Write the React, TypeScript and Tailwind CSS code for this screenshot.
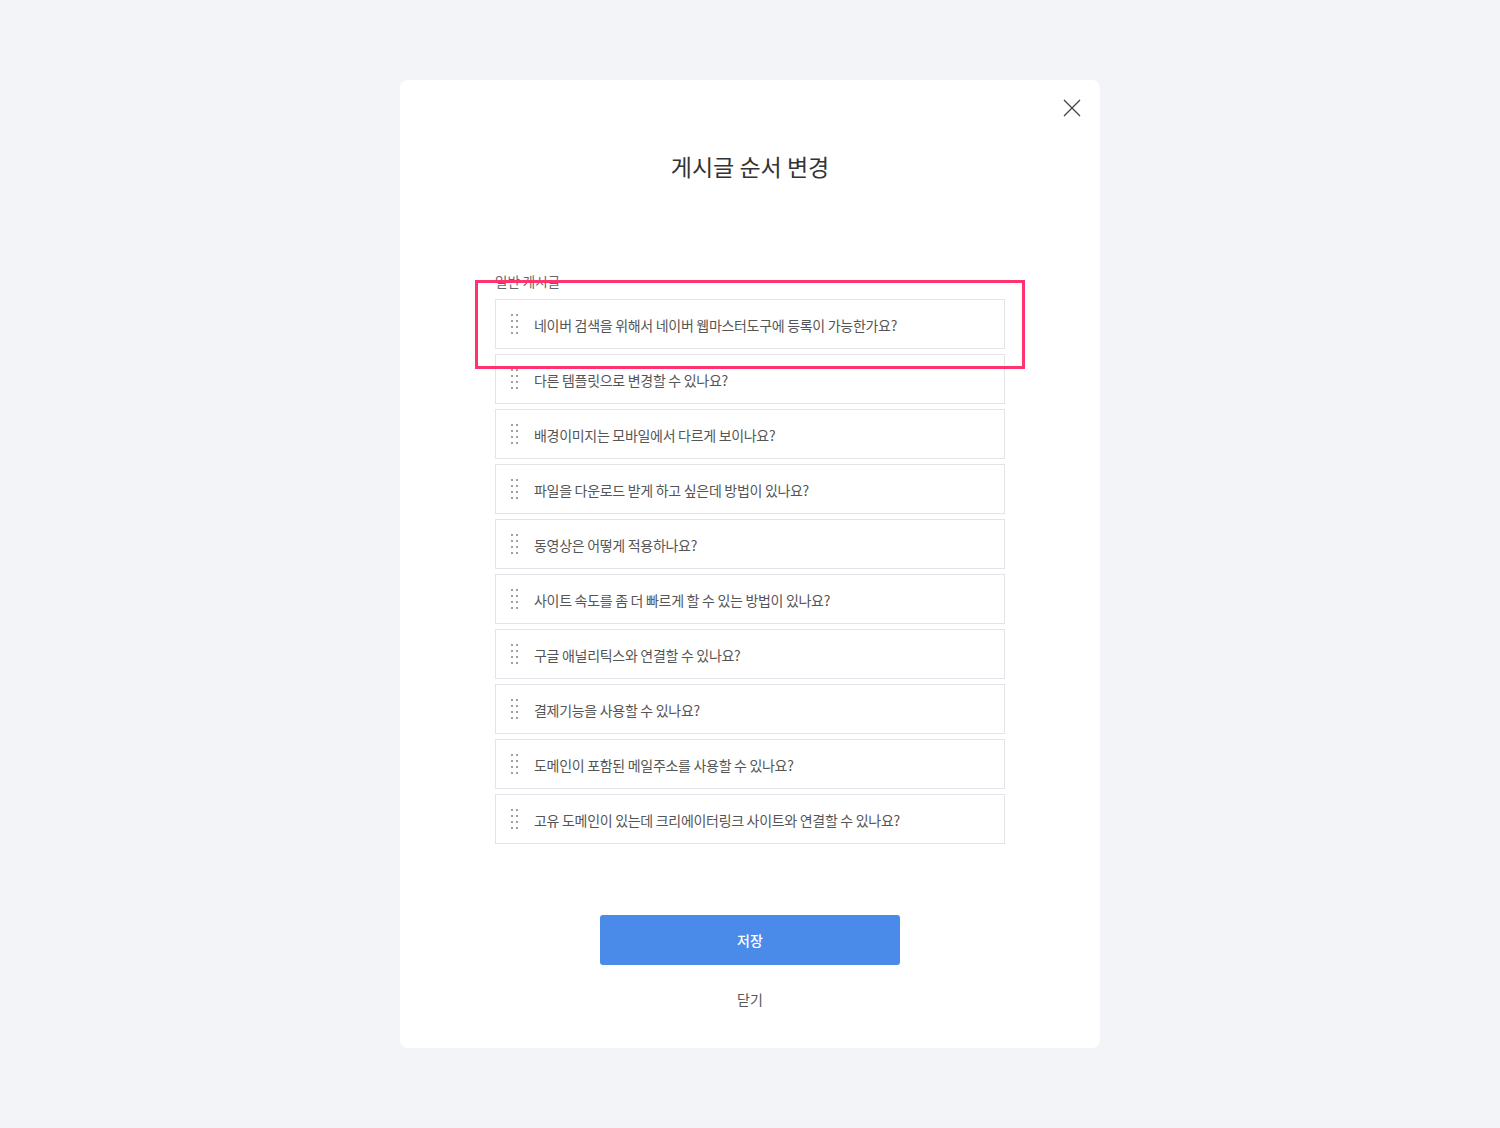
import React from "react";

const items = [
  "네이버 검색을 위해서 네이버 웹마스터도구에 등록이 가능한가요?",
  "다른 템플릿으로 변경할 수 있나요?",
  "배경이미지는 모바일에서 다르게 보이나요?",
  "파일을 다운로드 받게 하고 싶은데 방법이 있나요?",
  "동영상은 어떻게 적용하나요?",
  "사이트 속도를 좀 더 빠르게 할 수 있는 방법이 있나요?",
  "구글 애널리틱스와 연결할 수 있나요?",
  "결제기능을 사용할 수 있나요?",
  "도메인이 포함된 메일주소를 사용할 수 있나요?",
  "고유 도메인이 있는데 크리에이터링크 사이트와 연결할 수 있나요?",
];

function Handle() {
  return (
    <div className="flex flex-col gap-[4px] w-[7px] shrink-0">
      {[0, 1, 2, 3].map((r) => (
        <div key={r} className="flex gap-[3px]">
          <span className="block w-[2px] h-[2px] bg-[#a0a0a0]" />
          <span className="block w-[2px] h-[2px] bg-[#a0a0a0]" />
        </div>
      ))}
    </div>
  );
}

export default function App() {
  return (
    <div
      className="min-h-[1128px] bg-[#f3f4f8] flex justify-center pt-[80px]"
      style={{ fontFamily: '"Noto Sans CJK KR", "Noto Sans", sans-serif' }}
    >
      <div className="relative w-[700px] h-[968px] bg-white rounded-[8px] flex flex-col items-center">
        <button className="absolute top-[19px] right-[19px] w-[18px] h-[18px] text-[#444]">
          <svg width="18" height="18" viewBox="0 0 18 18" fill="none">
            <path d="M1 1L17 17M17 1L1 17" stroke="#444" strokeWidth="1.3" />
          </svg>
        </button>
        <h1 className="mt-[70px] text-[23px] leading-[32px] text-[#333] font-normal">
          게시글 순서 변경
        </h1>
        <div className="relative w-[510px] mt-[90px]">
          <div className="text-[13.5px] leading-[18px] text-[#666] h-[18px]">일반 게시글</div>
          <div className="flex flex-col gap-[5px] mt-[9px]">
            {items.map((t) => (
              <div
                key={t}
                className="h-[50px] border border-[#e3e4e8] flex items-center pl-[15px] gap-[16px]"
              >
                <Handle />
                <span className="text-[14px] leading-[20px] pt-[1px] text-[#555] tracking-[-0.3px]">{t}</span>
              </div>
            ))}
          </div>
          <div className="absolute left-[-20px] top-[8px] w-[550px] h-[89px] border-[3px] border-[#ff3370] pointer-events-none" />
        </div>
        <button className="mt-[71px] w-[300px] h-[50px] rounded-[3px] bg-[#4a8ae8] text-white text-[14px] font-medium">
          저장
        </button>
        <button className="mt-[24px] text-[14px] text-[#555]">닫기</button>
      </div>
    </div>
  );
}
